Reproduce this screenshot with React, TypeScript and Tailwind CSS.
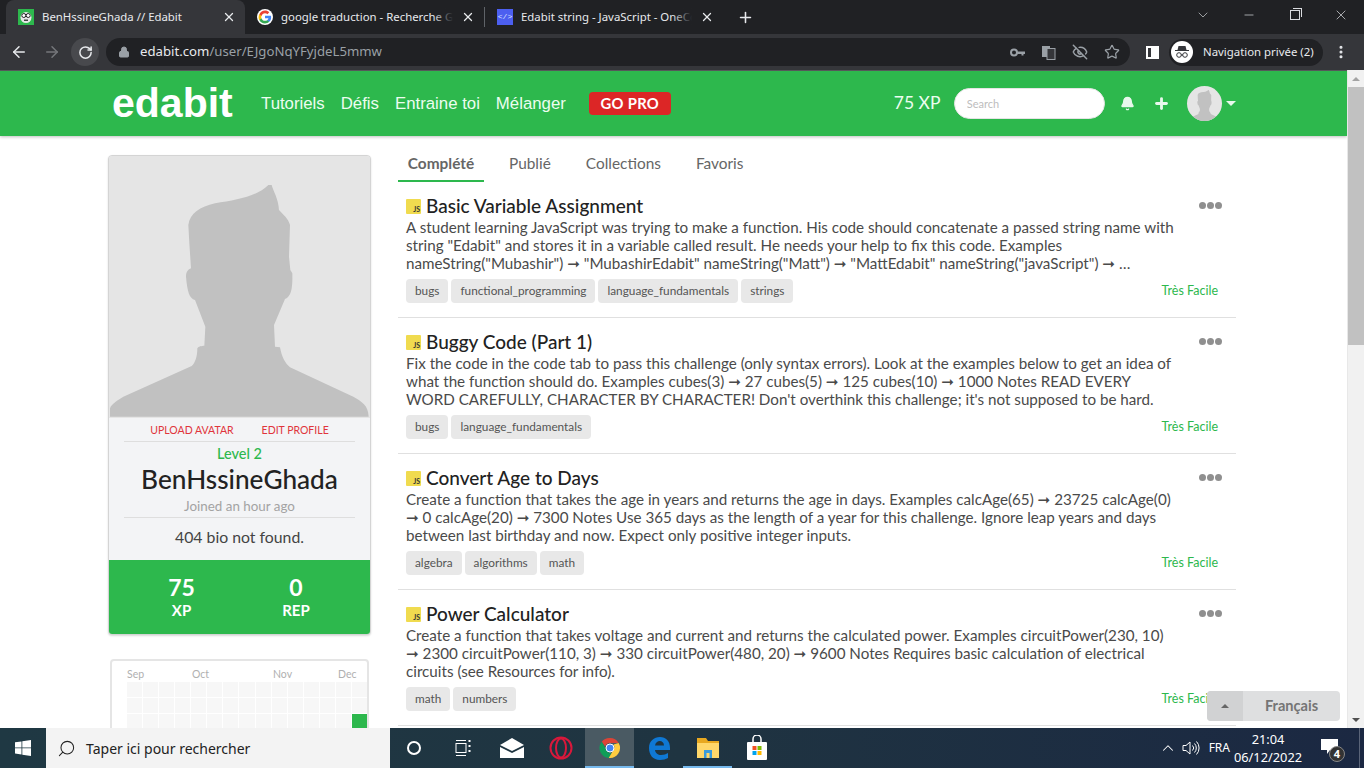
import React from "react";
import { ArrowLeft, ArrowRight, RotateCw, Lock, EyeOff, Star, Plus, X, ChevronDown, ChevronUp, Minus, Search, Bell, EllipsisVertical } from "lucide-react";

const Silhouette = ({ className }: { className?: string }) => (
  <svg viewBox="27 18 783 783" className={className} preserveAspectRatio="none">
    <path fill="#c1c1c1" d="M30 800 L30 775 C35 760 55 750 70 740 L275 648 C285 640 292 620 292 595 C295 588 305 588 313 587 L316 530 L285 450 C268 445 262 425 258 380 C258 365 265 358 273 355 L268 280 L265 225 C270 190 300 170 345 160 C410 150 470 140 505 105 L515 105 C520 125 535 145 537 180 C550 195 565 205 570 225 L567 320 L571 360 L577 370 C578 410 575 440 555 447 L522 525 L525 590 L540 592 C545 620 555 640 570 652 L760 740 C785 755 805 765 806 800 Z" />
  </svg>
);

const ChromeLogo = ({ size = 16 }: { size?: number }) => (
  <svg width={size} height={size} viewBox="0 0 48 48">
    <path fill="#db4437" d="M24 4a20 20 0 0 1 17.3 10H24a10 10 0 0 0-9.6 7.2L7.5 11.3A20 20 0 0 1 24 4z" />
    <path fill="#0f9d58" d="M7.5 11.3l8.6 15A10 10 0 0 0 27 33.500L21.500 43.800A20 20 0 0 1 7.500 11.300z" />
    <path fill="#ffcd40" d="M41.300 14A20 20 0 0 1 21.500 43.800l8.600-14.900A10 10 0 0 0 31 17z" />
    <circle cx="24" cy="24" r="8" fill="#4285f4" stroke="#fff" strokeWidth="2" />
  </svg>
);

const GoogleLogo = () => (
  <div className="w-4 h-4 rounded-full bg-white flex items-center justify-center">
    <svg width="14" height="14" viewBox="0 0 48 48">
      <path fill="#4285f4" d="M45 24.500c0-1.600-.1-3.100-.4-4.500H24v8.500h11.800c-.5 2.700-2 5-4.400 6.600v5.500h7.100C42.700 36.700 45 31.100 45 24.500z" />
      <path fill="#34a853" d="M24 46c5.900 0 10.900-2 14.500-5.400l-7.100-5.500c-2 1.300-4.500 2.100-7.400 2.100-5.700 0-10.500-3.800-12.200-9H4.500v5.700C8.100 41.100 15.500 46 24 46z" />
      <path fill="#fbbc05" d="M11.800 28.700c-.9-2.700-.9-5.700 0-8.400v-5.700H4.500a22 22 0 0 0 0 19.800z" />
      <path fill="#ea4335" d="M24 10.900c3.200 0 6.100 1.100 8.400 3.300l6.300-6.300C34.900 4.300 29.900 2 24 2 15.500 2 8.100 6.900 4.500 14.600l7.300 5.700c1.700-5.200 6.500-9.400 12.200-9.400z" />
    </svg>
  </div>
);

const EdabitFavicon = () => (
  <div className="w-4 h-4 bg-[#2db84d] flex items-center justify-center">
    <svg width="14" height="14" viewBox="0 0 14 14">
      <circle cx="7" cy="7.500" r="5.500" fill="#e8e8e8" />
      <circle cx="4.800" cy="5.500" r="2" fill="#fff" stroke="#222" strokeWidth="1" />
      <circle cx="9.200" cy="5.500" r="2" fill="#fff" stroke="#222" strokeWidth="1" />
      <rect x="5" y="9.500" width="4" height="1.500" fill="#444" />
    </svg>
  </div>
);

const Tab = ({ active, icon, title, fade, width }: { active?: boolean; icon: React.ReactNode; title: string; fade?: boolean; width: string }) => (
  <div className={`${width} h-[34px] flex items-center pl-3 pr-[9px] shrink-0 ${active ? "bg-[#35363a] rounded-t-[8px]" : ""}`}>
    <div className="shrink-0">{icon}</div>
    <div className="ml-2 pb-[1px] flex-1 text-[11.400px] text-[#e8eaed] whitespace-nowrap overflow-hidden font-['Noto_Sans'] relative">
      {title}
      {fade && <div className="absolute right-0 top-0 h-full w-5 bg-gradient-to-r from-transparent to-[#202124]" />}
    </div>
    <X size={14} strokeWidth={2.2} className="text-[#e8eaed] shrink-0 ml-2" />
  </div>
);

const BrowserChrome = () => (
  <div className="shrink-0 font-['Noto_Sans']">
    <div className="h-[34px] bg-[#202124] flex pl-[6px]">
      <Tab active width="w-[239px]" icon={<EdabitFavicon />} title="BenHssineGhada // Edabit" />
      <Tab width="w-[239px]" icon={<GoogleLogo />} title="google traduction - Recherche Google" fade />
      <div className="w-px h-5 bg-[#5f6368] self-center" />
      <Tab width="w-[238px]" icon={<div className="w-4 h-4 bg-[#4c5ff0] text-[#dfe3ff] text-[8px] flex items-center justify-center font-['Liberation_Mono']">&lt;/&gt;</div>} title="Edabit string - JavaScript - OneCompiler" fade />
      <div className="w-[17px] flex items-center justify-center ml-[14px]">
        <Plus size={17} strokeWidth={2.2} className="text-[#e8eaed]" />
      </div>
      <div className="ml-auto flex items-center h-[30px] text-[#dadce0]">
        <div className="w-[46px] flex justify-center"><ChevronDown size={16} strokeWidth={1} /></div>
        <div className="w-[46px] flex justify-center"><Minus size={14} strokeWidth={1.2} /></div>
        <div className="w-[46px] flex justify-center">
          <div className="relative w-[10px] h-[10px] border border-[#dadce0]">
            <div className="absolute -top-[3px] -right-[3px] w-[9px] h-[9px] border-t border-r border-[#dadce0]" />
          </div>
        </div>
        <div className="w-[46px] flex justify-center"><X size={16} strokeWidth={1.1} /></div>
      </div>
    </div>
    <div className="h-[36px] bg-[#35363a] flex items-center">
      <div className="w-[38px] flex justify-center text-[#e8eaed]"><ArrowLeft size={18} strokeWidth={2} /></div>
      <div className="w-[28px] flex justify-center text-[#75777b]"><ArrowRight size={18} strokeWidth={2} /></div>
      <div className="w-[28px] h-[28px] ml-[5px] rounded-full bg-[#48494d] flex items-center justify-center text-[#e8eaed]"><RotateCw size={15} strokeWidth={2.4} /></div>
      <div className="ml-[7px] w-[1024px] h-[28px] rounded-full bg-[#202124] flex items-center pl-[12px] pr-[10px]">
        <Lock size={12} fill="#9aa0a6" className="text-[#9aa0a6]" />
        <div className="ml-[10px] text-[13.200px] text-[#9aa0a6] flex-1 whitespace-nowrap"><span className="text-[#e8eaed]">edabit.com</span>/user/EJgoNqYFyjdeL5mmw</div>
        <div className="flex items-center gap-[16px] text-[#9aa0a6]">
          <svg width="15" height="15" viewBox="0 0 15 15" fill="#9aa0a6"><circle cx="4" cy="7.500" r="3" fill="none" stroke="#9aa0a6" strokeWidth="2" /><path d="M6.500 6.500H15V9H13.500V10.500H11.500V9H6.500z" /></svg>
          <svg width="15" height="15" viewBox="0 0 15 15"><rect x="1" y="1" width="8" height="11" fill="#9aa0a6" /><rect x="6" y="3.500" width="8" height="11" fill="#35363a" stroke="#9aa0a6" /></svg>
          <EyeOff size={16} strokeWidth={2.2} />
          <Star size={16} strokeWidth={1.8} />
        </div>
      </div>
      <div className="ml-[16px] w-[13px] h-[13px] border-[2px] border-white flex justify-end"><div className="w-[6px] bg-white" /></div>
      <div className="ml-[10px] w-[154px] h-[27px] rounded-full bg-[#202124] flex items-center pl-[2px]">
        <div className="w-[22px] h-[22px] rounded-full bg-white flex items-center justify-center">
          <svg width="16" height="16" viewBox="0 0 16 16"><path fill="#35363a" d="M4.500 2h7l1 4H15v1H1V6h2.500z" /><circle cx="5" cy="11" r="2.300" fill="none" stroke="#35363a" /><circle cx="11" cy="11" r="2.300" fill="none" stroke="#35363a" /><path stroke="#35363a" d="M7 11h2" /></svg>
        </div>
        <span className="ml-[10px] text-[11.400px] text-[#e8eaed] whitespace-nowrap">Navigation privée (2)</span>
      </div>
      <EllipsisVertical size={16} strokeWidth={2.6} className="text-[#e8eaed] ml-[10px]" />
    </div>
  </div>
);

const Header = () => (
  <div className="h-[66px] shrink-0 bg-[#2db84d] border-t border-[#55585a] shadow-[0_1px_3px_rgba(0,0,0,0.25)] flex items-center pl-[112px] relative z-10 font-['Lato',sans-serif]">
    <div className="font-['Liberation_Sans'] font-bold text-[41px] text-white w-[149px]">edabit</div>
    <nav className="flex gap-[16px] font-['Liberation_Sans'] text-[16.800px] text-[#ecfdf0]">
      <span>Tutoriels</span><span>Défis</span><span>Entraine toi</span><span>Mélanger</span>
    </nav>
    <div className="ml-[23px] w-[82px] h-[23px] rounded-[4px] bg-[#dc2626] text-white font-bold text-[14.800px] tracking-[0.3px] flex items-center justify-center">GO PRO</div>
    <div className="ml-[223px] w-[46px] text-[17.500px] text-[#ecfdf0] whitespace-nowrap">75 XP</div>
    <input placeholder="Search" className="ml-[14px] w-[151px] h-[31px] rounded-full bg-white pl-3 text-[11px] border border-[#e5e5e5] placeholder:text-[#bdbdbd]" />
    <Bell size={15} fill="#e8f8ec" strokeWidth={2} className="ml-[15px] text-[#e8f8ec]" />
    <Plus size={17} strokeWidth={4} className="ml-[18px] text-[#e8f8ec]" />
    <div className="ml-[17px] w-[35px] h-[35px] rounded-full bg-[#e5e5e5] overflow-hidden"><Silhouette className="w-full h-full" /></div>
    <div className="ml-[4px] w-0 h-0 border-x-[5px] border-x-transparent border-t-[5px] border-t-[#e8f8ec]" />
  </div>
);

const ProfileCard = () => (
  <div className="w-[263px] rounded-[4px] border border-[#d4d4d4] shadow-[0_1px_2px_rgba(0,0,0,0.15)] overflow-hidden bg-[#f3f4f6]">
    <div className="h-[261px] bg-[#e5e5e5]"><Silhouette className="w-full h-full" /></div>
    <div className="h-[143px] px-[15px] flex flex-col items-center border-t border-[#e5e5e5]">
      <div className="w-full h-[24px] pt-[3px] border-b border-[#dedede] flex justify-center items-center gap-[28px] text-[10.500px] text-[#e0353b]">
        <span>UPLOAD AVATAR</span><span>EDIT PROFILE</span>
      </div>
      <div className="text-[14.500px] font-medium text-[#2db84d] mt-[1px] leading-[22px]">Level 2</div>
      <div className="text-[26.200px] font-medium text-[#222] leading-[30px] -mt-[1px]">BenHssineGhada</div>
      <div className="w-full text-center h-[24px] leading-[24px] border-b border-[#dedede] text-[13.400px] text-[#a3a3a3]">Joined an hour ago</div>
      <div className="text-[15.800px] text-[#444] mt-[9px] leading-[20px]">404 bio not found.</div>
    </div>
    <div className="h-[74px] bg-[#2db84d] flex text-white font-bold text-center pt-[13px] pl-[15px]">
      <div className="w-[115px]"><div className="text-[23px] leading-[28px]">75</div><div className="text-[15px] leading-[18px]">XP</div></div>
      <div className="w-[114px]"><div className="text-[23px] leading-[28px]">0</div><div className="text-[15px] leading-[18px]">REP</div></div>
    </div>
  </div>
);

const Heatmap = () => (
  <div className="ml-[2px] mt-[24px] w-[259px] rounded-[4px] border-2 border-[#e5e5e5] bg-white pl-[15px] pt-[6px] overflow-hidden">
    <div className="flex text-[10.500px] text-[#b0b0b0] h-[15px] leading-[14px]">
      <span className="w-[65px]">Sep</span><span className="w-[81px]">Oct</span><span className="w-[65px]">Nov</span><span>Dec</span>
    </div>
    <div className="grid grid-cols-[repeat(15,15.07px)] gap-px">
      {Array.from({ length: 75 }).map((_, i) => (
        <div key={i} className={`h-[15px] ${i === 44 ? "bg-[#2db84d]" : "bg-[#f7f7f7]"}`} />
      ))}
    </div>
  </div>
);

const JsBadge = () => (
  <div className="w-[15px] h-[15px] bg-[#f0db4f] flex items-end justify-end pr-[1px] text-[7px] leading-[9px] font-bold text-[#333] shrink-0 rounded-[1px]">JS</div>
);

const Dots = () => (
  <div className="flex gap-px -mt-[2px]">
    <div className="w-[7px] h-[7px] rounded-full bg-[#8f8f8f]" />
    <div className="w-[7px] h-[7px] rounded-full bg-[#8f8f8f]" />
    <div className="w-[7px] h-[7px] rounded-full bg-[#8f8f8f]" />
  </div>
);

const items = [
  {
    title: "Basic Variable Assignment",
    lines: 'A student learning JavaScript was trying to make a function. His code should concatenate a passed string name with string "Edabit" and stores it in a variable called result. He needs your help to fix this code. Examples nameString("Mubashir") ➞ "MubashirEdabit" nameString("Matt") ➞ "MattEdabit" nameString("javaScript") ➞ …',
    tags: ["bugs", "functional_programming", "language_fundamentals", "strings"],
  },
  {
    title: "Buggy Code (Part 1)",
    lines: "Fix the code in the code tab to pass this challenge (only syntax errors). Look at the examples below to get an idea of what the function should do. Examples cubes(3) ➞ 27 cubes(5) ➞ 125 cubes(10) ➞ 1000 Notes READ EVERY WORD CAREFULLY, CHARACTER BY CHARACTER! Don't overthink this challenge; it's not supposed to be hard.",
    tags: ["bugs", "language_fundamentals"],
  },
  {
    title: "Convert Age to Days",
    lines: "Create a function that takes the age in years and returns the age in days. Examples calcAge(65) ➞ 23725 calcAge(0) ➞ 0 calcAge(20) ➞ 7300 Notes Use 365 days as the length of a year for this challenge. Ignore leap years and days between last birthday and now. Expect only positive integer inputs.",
    tags: ["algebra", "algorithms", "math"],
  },
  {
    title: "Power Calculator",
    lines: "Create a function that takes voltage and current and returns the calculated power. Examples circuitPower(230, 10) ➞ 2300 circuitPower(110, 3) ➞ 330 circuitPower(480, 20) ➞ 9600 Notes Requires basic calculation of electrical circuits (see Resources for info).",
    tags: ["math", "numbers"],
  },
];

const Challenge = ({ title, lines, tags }: { title: string; lines: string; tags: string[] }) => (
  <div className="h-[136px] border-b border-[#e0e0e0] pl-[8px] pr-[14px] pt-[12px]">
    <div className="flex items-center h-[24px]">
      <JsBadge />
      <div className="ml-[5px] text-[19px] font-medium text-[#222] leading-[24px]">{title}</div>
      <div className="ml-auto"><Dots /></div>
    </div>
    <div className="w-[772px] text-[15.200px] leading-[18.200px] text-[#4a4a4a] font-['Lato',_'DejaVu_Sans',sans-serif]">{lines}</div>
    <div className="flex items-center mt-[6px] pr-[4px]">
      <div className="flex gap-[3px]">
        {tags.map((t) => (
          <div key={t} className="h-[24px] px-[9px] rounded-[4px] bg-[#e8e8e8] text-[11.800px] text-[#555] flex items-center">{t}</div>
        ))}
      </div>
      <div className="ml-auto pt-[2px] text-[12.500px] text-[#2db84d]">Très Facile</div>
    </div>
  </div>
);

const Main = () => (
  <div className="flex-1 overflow-hidden bg-white pl-[108px] pt-[19px] flex gap-[27px] font-['Lato',sans-serif]">
    <div className="w-[263px] shrink-0">
      <ProfileCard />
      <Heatmap />
    </div>
    <div className="w-[838px] shrink-0">
      <div className="flex h-[27px] text-[15.400px] text-[#666]">
        <div className="w-[86px] h-[27px] text-center font-bold border-b-[2px] border-[#2db84d] leading-[16px]">Complété</div>
        <div className="ml-[25px] leading-[16px]">Publié</div>
        <div className="ml-[35px] leading-[16px]">Collections</div>
        <div className="ml-[35px] leading-[16px]">Favoris</div>
      </div>
      {items.map((it) => <Challenge key={it.title} {...it} />)}
    </div>
  </div>
);

const Scrollbar = () => (
  <div className="w-[17px] shrink-0 bg-[#f1f1f1] flex flex-col items-center border-l border-[#e8e8e8]">
    <div className="h-[17px] flex items-center justify-center"><div className="w-0 h-0 border-x-[4px] border-x-transparent border-b-[4px] border-b-[#a3a3a3]" /></div>
    <div className="w-full h-[258px] bg-[#c1c1c1]" />
    <div className="mt-auto h-[17px] flex items-center justify-center"><div className="w-0 h-0 border-x-[4px] border-x-transparent border-t-[4px] border-t-[#505050]" /></div>
  </div>
);

const TaskIcon = ({ children, active, under, w = "w-[49px]" }: { children: React.ReactNode; active?: boolean; under?: boolean; w?: string }) => (
  <div className={`${w} h-full flex items-center justify-center relative ${active ? "bg-[#4a5a63]" : ""}`}>
    {children}
    {under && <div className="absolute bottom-0 left-0 right-0 h-[2px] bg-[#76b9ed]" />}
  </div>
);

const Taskbar = () => (
  <div className="h-[40px] shrink-0 bg-gradient-to-r from-[#1f3843] via-[#1f3441] to-[#1b2842] flex items-center font-['Noto_Sans'] text-white">
    <div className="w-[46px] flex justify-center">
      <svg width="16" height="16" viewBox="0 0 16 16" fill="#fff"><path d="M0 2.300 6.500 1.400V7.500H0zM7.300 1.300 16 0V7.500H7.300zM0 8.300H6.500V14.500L0 13.600zM7.300 8.300H16V16L7.300 14.700z" /></svg>
    </div>
    <div className="w-[344px] h-full bg-[#f3f3f3] flex items-center pl-[11px] text-[#222] text-[14px]">
      <Search size={19} strokeWidth={1.3} className="-scale-x-100" />
      <span className="ml-[10px]">Taper ici pour rechercher</span>
    </div>
    <div className="flex h-full">
      <TaskIcon w="w-[48px]"><div className="w-[14px] h-[14px] rounded-full border-[2px] border-white" /></TaskIcon>
      <TaskIcon>
        <svg width="18" height="18" viewBox="0 0 18 18" fill="none" stroke="#fff" strokeWidth="1"><path d="M2 1.500h10M2 16.500h10" /><rect x="2" y="4.500" width="10" height="9" /><path d="M15.500 1v2M15.500 6v2M15.500 11v2" strokeWidth="2" /></svg>
      </TaskIcon>
      <TaskIcon>
        <svg width="24" height="20" viewBox="0 0 24 20" fill="#fff"><path d="M0 7 12 0l12 7-12 6z" /><path d="M0 9l12 6 12-6v11H0z" /></svg>
      </TaskIcon>
      <TaskIcon>
        <svg width="24" height="24" viewBox="0 0 24 24" fill="none" stroke="#d9183b" strokeWidth="2"><circle cx="12" cy="12" r="10.500" /><ellipse cx="12" cy="12" rx="5" ry="9.500" /></svg>
      </TaskIcon>
      <TaskIcon active under><ChromeLogo size={24} /></TaskIcon>
      <TaskIcon>
        <svg width="24" height="24" viewBox="0 0 24 24"><path fill="#0f78d4" d="M2 12C2 5 7 1 13 1c6 0 10 4 10 11v2H8c.5 3.500 3 5 6 5 3 0 5-.7 7-2v5c-2 1.200-5 2-8 2C6 24 2 19 2 12zm6-2.500h9c0-3-2-4.500-4.200-4.500C10.500 5 8.500 6.500 8 9.500z" /></svg>
      </TaskIcon>
      <TaskIcon under>
        <svg width="24" height="22" viewBox="0 0 24 22"><path fill="#e8a820" d="M1 1h9l2 3h11v4H1z" /><rect x="1" y="6" width="22" height="15" fill="#ffd76a" /><rect x="8" y="13" width="8" height="8" fill="#3a9bdc" /><rect x="10.500" y="16" width="3" height="5" fill="#ffd76a" /></svg>
      </TaskIcon>
      <TaskIcon>
        <svg width="22" height="26" viewBox="0 0 22 26"><path fill="none" stroke="#fff" strokeWidth="1.500" d="M7 8V4a4 4 0 0 1 8 0v4" /><rect x="1" y="7" width="20" height="18" rx="1" fill="#fff" /><rect x="6.500" y="11" width="4" height="4" fill="#f25022" /><rect x="11.500" y="11" width="4" height="4" fill="#7fba00" /><rect x="6.500" y="16" width="4" height="4" fill="#00a4ef" /><rect x="11.500" y="16" width="4" height="4" fill="#ffb900" /></svg>
      </TaskIcon>
    </div>
    <div className="ml-auto flex items-center h-full">
      <ChevronUp size={18} strokeWidth={1.4} />
      <svg width="18" height="16" viewBox="0 0 18 16" fill="none" stroke="#fff" strokeWidth="1" className="ml-[5px]"><path d="M1 5.500h3L8 2v12L4 10.500H1z" /><path d="M10.500 5.500a3.500 3.500 0 0 1 0 5M12.500 3.500a6.500 6.500 0 0 1 0 9M14.500 1.500a9.500 9.500 0 0 1 0 13" /></svg>
      <span className="ml-[9px] text-[12px]">FRA</span>
      <div className="ml-[-3px] w-[82px] text-center text-[12.800px] leading-[18px] -mt-[1px]">
        <div>21:04</div><div>06/12/2022</div>
      </div>
      <div className="ml-[12px] relative w-[20px] h-[20px]">
        <svg width="18" height="16" viewBox="0 0 18 16" fill="#fff" className="mt-[1px]"><path d="M0 0h17v11H9l-3 4v-4H0z" /></svg>
        <div className="absolute left-[8px] top-[8px] w-[16px] h-[16px] rounded-full bg-[#333] border border-[#888] text-[11px] font-bold flex items-center justify-center">4</div>
      </div>
      <div className="ml-[18px] mr-[4px] w-px h-full bg-[#5a6478]" />
    </div>
  </div>
);

export default function App() {
  return (
    <div className="w-[1364px] h-[768px] flex flex-col overflow-hidden relative">
      <BrowserChrome />
      <div className="h-[658px] flex shrink-0 relative">
        <div className="flex-1 flex flex-col min-w-0 overflow-hidden">
          <Header />
          <Main />
        </div>
        <Scrollbar />
        <div className="absolute left-[1207px] top-[621px] w-[133px] h-[30px] rounded-[4px] bg-[#dedfe0] overflow-hidden flex font-['Lato',sans-serif]">
          <div className="w-[36px] bg-[#d1d2d3] flex items-center justify-center"><div className="w-0 h-0 border-x-[4px] border-x-transparent border-b-[4px] border-b-[#666]" /></div>
          <div className="flex-1 flex items-center justify-center pb-[1px] text-[14.600px] font-bold text-[#757575]">Français</div>
        </div>
      </div>
      <Taskbar />
    </div>
  );
}
